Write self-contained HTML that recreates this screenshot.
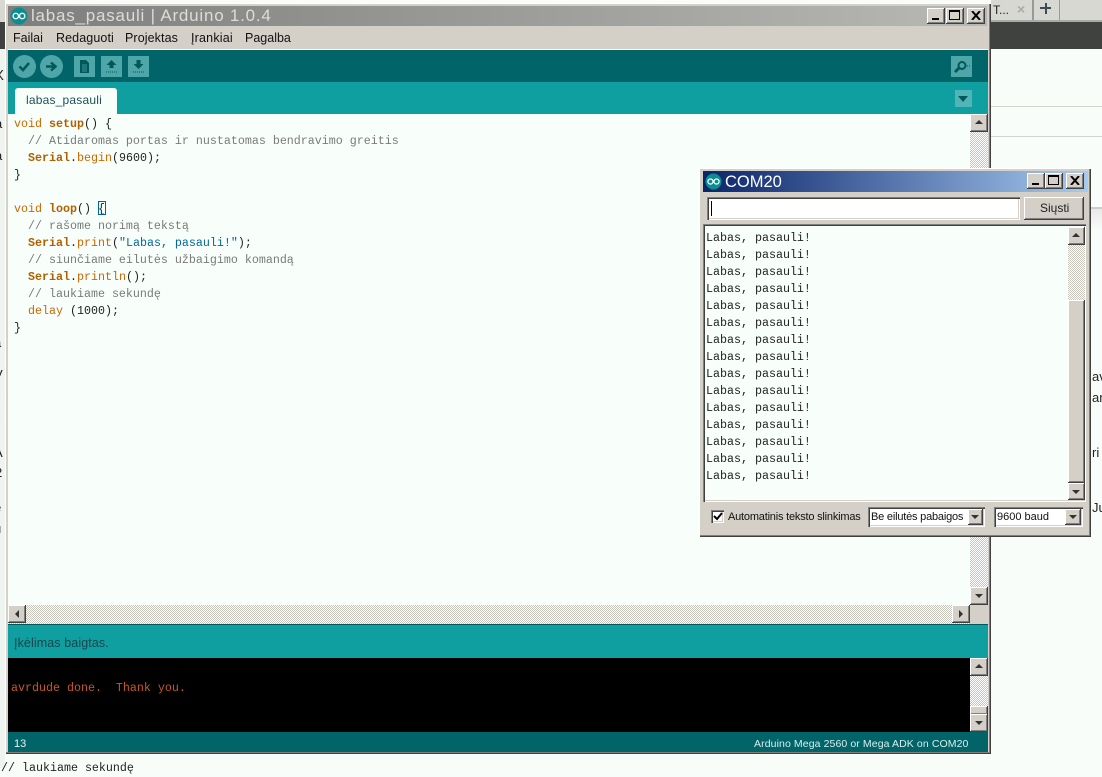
<!DOCTYPE html>
<html><head><meta charset="utf-8"><style>
*{box-sizing:border-box}
html,body{margin:0;padding:0;width:1102px;height:768px;overflow:hidden;background:#f8fdfa}
.a{position:absolute}
.t{position:absolute;white-space:pre;font-family:"Liberation Sans",sans-serif}
.m{position:absolute;white-space:pre;font-family:"Liberation Mono",monospace;font-size:11.67px;line-height:17px;color:#222}
.k{color:#cc6600}.b{color:#b06000;font-weight:bold}.c{color:#7a7a7a}.s{color:#006699}
.btn{position:absolute;background:#d4d0c8;box-shadow:inset -1px -1px #404040,inset 1px 1px #fff,inset -2px -2px #808080}
.chk{position:absolute;background:repeating-conic-gradient(#c8c5bd 0 25%,#fff 0 50%) 0 0/2px 2px}
.tri{position:absolute;width:0;height:0;border-left:4px solid transparent;border-right:4px solid transparent}
.up{border-bottom:4px solid #333}.dn{border-top:4px solid #333}
.sunk{position:absolute;background:#fff;box-shadow:inset 1px 1px #808080,inset 2px 2px #404040,inset -1px -1px #fff,inset -2px -2px #d4d0c8}
</style></head><body>
<!-- background -->
<div class="a" style="left:991px;top:0;width:111px;height:22px;background:#d8d8d2"></div>
<div class="a" style="left:991px;top:20px;width:111px;height:2px;background:#aaa"></div>
<div class="a" style="left:991px;top:22px;width:111px;height:27px;background:#3f423e"></div>
<div class="t" style="left:993px;top:3px;font-size:12px;color:#222">T...</div>
<div class="t" style="left:1017px;top:1px;font-size:14px;color:#aaa;font-weight:bold">×</div>
<div class="a" style="left:1032px;top:0;width:2px;height:20px;background:#999"></div>
<div class="a" style="left:1059px;top:0;width:1px;height:20px;background:#999"></div>
<div class="a" style="left:1040px;top:7px;width:11px;height:2px;background:#3f4a58"></div>
<div class="a" style="left:1045px;top:3px;width:2px;height:11px;background:#3f4a58"></div>
<div class="a" style="left:991px;top:106px;width:111px;height:1px;background:#d5d5d0"></div>
<div class="a" style="left:991px;top:136px;width:111px;height:1px;background:#d5d5d0"></div>
<div class="a" style="left:1091px;top:207px;width:11px;height:2px;background:#ccc"></div>
<div class="a" style="left:1091px;top:209px;width:11px;height:22px;background:linear-gradient(#e8e8e8,#f8fdfa)"></div>
<div class="t" style="left:1092px;top:369px;font-size:13px;color:#222">av</div>
<div class="t" style="left:1092px;top:390px;font-size:13px;color:#222">ar</div>
<div class="t" style="left:1092px;top:445px;font-size:13px;color:#222">ri</div>
<div class="t" style="left:1092px;top:500px;font-size:13px;color:#222">Ju</div>
<div class="a" style="left:0;top:0;width:5px;height:768px;background:#f0f4f1"></div>
<div class="a" style="left:0;top:0;width:5px;height:22px;background:#d8d8d2"></div>
<div class="a" style="left:0;top:22px;width:5px;height:27px;background:#3f423e"></div>
<div class="t" style="left:-6px;top:67px;font-size:15px;color:#333">X</div>
<div class="t" style="left:-5px;top:116px;font-size:13px;color:#222">a</div>
<div class="t" style="left:-5px;top:148px;font-size:13px;color:#222">a</div>
<div class="t" style="left:-6px;top:335px;font-size:13px;color:#222">a</div>
<div class="t" style="left:-6px;top:367px;font-size:13px;color:#222">V</div>
<div class="t" style="left:-2px;top:389px;font-size:13px;color:#222">i</div>
<div class="t" style="left:-2px;top:410px;font-size:13px;color:#222">i</div>
<div class="t" style="left:-6px;top:445px;font-size:13px;color:#222">A</div>
<div class="t" style="left:-5px;top:465px;font-size:13px;color:#222">2</div>
<div class="t" style="left:-6px;top:500px;font-size:13px;color:#222">e</div>
<div class="t" style="left:-6px;top:521px;font-size:13px;color:#222">u</div>
<div class="m" style="left:1px;top:760px;color:#222">// laukiame sekundę</div>

<!-- main window -->
<div class="a" style="left:5px;top:3px;width:986px;height:751px;background:#d4d0c8;box-shadow:inset 1px 1px #fff,inset -1px -1px #404040,inset -2px -2px #808080"></div>
<div class="a" style="left:8px;top:6px;width:979px;height:20px;background:linear-gradient(90deg,#7e7e7e,#b8b8b4)"></div>
<svg class="a" style="left:10px;top:7px" width="18" height="18" viewBox="0 0 18 18"><circle cx="9" cy="9" r="8.500" fill="#0c8d90"/><g fill="none" stroke="#fff" stroke-width="1.300"><circle cx="5.800" cy="9" r="2.700"/><circle cx="12.200" cy="9" r="2.700"/></g></svg>
<div class="t" style="left:31px;top:6px;font-size:17px;line-height:20px;color:#dcdcd8;letter-spacing:.78px">labas_pasauli | Arduino 1.0.4</div>
<div class="btn" style="left:927px;top:8px;width:18px;height:16px"><div class="a" style="left:5px;top:10px;width:7px;height:2px;background:#000"></div></div>
<div class="btn" style="left:946px;top:8px;width:18px;height:16px"><div class="a" style="left:3px;top:2px;width:11px;height:10px;border:1px solid #000;border-top-width:2px"></div></div>
<div class="btn" style="left:967px;top:8px;width:18px;height:16px"><svg class="a" style="left:4px;top:3px" width="10" height="9"><path d="M1 0L9 9M9 0L1 9" stroke="#000" stroke-width="2"/></svg></div>
<div class="t" style="left:13px;top:31px;font-size:12.500px;line-height:15px;color:#111">Failai</div>
<div class="t" style="left:56px;top:31px;font-size:12.500px;line-height:15px;color:#111;letter-spacing:.1px">Redaguoti</div>
<div class="t" style="left:125px;top:31px;font-size:12.500px;line-height:15px;color:#111;letter-spacing:.1px">Projektas</div>
<div class="t" style="left:191px;top:31px;font-size:12.500px;line-height:15px;color:#111;letter-spacing:.2px">Įrankiai</div>
<div class="t" style="left:245px;top:31px;font-size:12.500px;line-height:15px;color:#111">Pagalba</div>
<div class="a" style="left:8px;top:49px;width:980px;height:1px;background:#fff"></div>
<!-- toolbar -->
<div class="a" style="left:8px;top:50px;width:980px;height:32px;background:#006468"></div>
<svg class="a" style="left:8px;top:50px" width="980" height="32" viewBox="0 0 980 32">
<circle cx="16.500" cy="16.500" r="11.500" fill="#4fa6a8"/><path d="M11.500 16.500l3.500 3.500 6-7" fill="none" stroke="#00585c" stroke-width="2.500"/>
<circle cx="43.500" cy="16.500" r="11.500" fill="#4fa6a8"/><path d="M38 16.500h8M43 12.500l4.500 4-4.500 4" fill="none" stroke="#00585c" stroke-width="2.500"/>
<rect x="66" y="6" width="21" height="21" fill="#4fa6a8"/><path d="M72 10h6l3 3v10h-9z" fill="#00585c"/><path d="M74 15h5M74 17h5M74 19h5M74 21h5" stroke="#4fa6a8" stroke-width=".7"/>
<rect x="93" y="6" width="21" height="21" fill="#4fa6a8"/><path d="M103.500 10l5 5h-3v3h-4v-3h-3z" fill="#00585c"/><path d="M98 22h11" stroke="#00585c" stroke-dasharray="1 1"/>
<rect x="120" y="6" width="21" height="21" fill="#4fa6a8"/><path d="M128.500 10h4v4h3l-5 5-5-5h3z" fill="#00585c"/><path d="M125 22h11" stroke="#00585c" stroke-dasharray="1 1"/>
<rect x="943" y="6" width="21" height="21" fill="#4fa6a8"/><circle cx="954" cy="15.500" r="3.500" fill="none" stroke="#00585c" stroke-width="2"/><path d="M951 18l-4 4" stroke="#00585c" stroke-width="3"/><path d="M959 16h3" stroke="#00585c" stroke-dasharray="1 1"/>
</svg>
<!-- tab bar -->
<div class="a" style="left:8px;top:82px;width:980px;height:32px;background:#0f9fa0"></div>
<div class="a" style="left:15px;top:88px;width:102px;height:26px;background:#f8fffb;border-radius:3px 3px 0 0"></div>
<div class="t" style="left:26px;top:92px;font-size:12px;line-height:16px;color:#1f4f55;letter-spacing:.2px">labas_pasauli</div>
<div class="a" style="left:955px;top:90px;width:17px;height:17px;background:#4fb5b6"></div>
<div class="tri" style="left:958px;top:96px;border-left-width:5.500px;border-right-width:5.500px;border-top:6px solid #00585c"></div>
<!-- editor -->
<div class="a" style="left:8px;top:114px;width:962px;height:491px;background:#f8fffb"></div>
<div class="m" style="left:14px;top:116px"><span class="k">void</span> <span class="b">setup</span>() {
  <span class="c">// Atidaromas portas ir nustatomas bendravimo greitis</span>
  <span class="b">Serial</span>.<span class="k">begin</span>(9600);
}

<span class="k">void</span> <span class="b">loop</span>() {
  <span class="c">// rašome norimą tekstą</span>
  <span class="b">Serial</span>.<span class="k">print</span>(<span class="s">"Labas, pasauli!"</span>);
  <span class="c">// siunčiame eilutės užbaigimo komandą</span>
  <span class="b">Serial</span>.<span class="k">println</span>();
  <span class="c">// laukiame sekundę</span>
  <span class="k">delay</span> (1000);
}</div>
<div class="a" style="left:98px;top:201px;width:8px;height:14px;border:1px solid #006699"></div>
<!-- editor scrollbars -->
<div class="chk" style="left:970px;top:114px;width:18px;height:491px"></div>
<div class="btn" style="left:970px;top:114px;width:18px;height:18px"><div class="tri up" style="left:5px;top:6px"></div></div>
<div class="btn" style="left:970px;top:587px;width:18px;height:18px"><div class="tri dn" style="left:5px;top:7px"></div></div>
<div class="chk" style="left:8px;top:605px;width:962px;height:19px"></div>
<div class="btn" style="left:8px;top:605px;width:18px;height:18px"><div class="tri" style="left:7px;top:5px;border:4px solid transparent;border-left:0;border-right:4px solid #333"></div></div>
<div class="btn" style="left:952px;top:605px;width:18px;height:18px"><div class="tri" style="left:7px;top:5px;border:4px solid transparent;border-right:0;border-left:4px solid #333"></div></div>
<div class="a" style="left:8px;top:624px;width:980px;height:1px;background:#00585c"></div>
<!-- status -->
<div class="a" style="left:8px;top:625px;width:980px;height:33px;background:#0f9fa0"></div>
<div class="t" style="left:14px;top:636px;font-size:12.500px;line-height:15px;color:#17464c;letter-spacing:.1px">Įkėlimas baigtas.</div>
<!-- console -->
<div class="a" style="left:8px;top:658px;width:962px;height:74px;background:#000;overflow:hidden"><div class="m" style="left:3px;top:-14px;color:#c8562a">avrdude: safemode: Fuses OK (E:FD, H:D8, L:FF)</div></div>
<div class="m" style="left:11px;top:680px;color:#c8562a">avrdude done.  Thank you.</div>
<div class="chk" style="left:970px;top:658px;width:18px;height:74px"></div>
<div class="btn" style="left:970px;top:658px;width:18px;height:18px"><div class="tri up" style="left:5px;top:6px"></div></div>
<div class="btn" style="left:970px;top:706px;width:18px;height:9px"></div>
<div class="btn" style="left:970px;top:714px;width:18px;height:18px"><div class="tri dn" style="left:5px;top:7px"></div></div>
<!-- footer -->
<div class="a" style="left:8px;top:732px;width:980px;height:20px;background:#006468"></div>
<div class="t" style="left:14px;top:737px;font-size:11px;line-height:14px;color:#e8f4f4">13</div>
<div class="t" style="left:754px;top:737px;font-size:10.500px;line-height:14px;color:#d8eeee;letter-spacing:.1px">Arduino Mega 2560 or Mega ADK on COM20</div>

<!-- serial window -->
<div class="a" style="left:699px;top:168px;width:392px;height:369px;background:#d4d0c8;box-shadow:inset 1px 1px #fff,inset -1px -1px #404040,inset -2px -2px #808080"></div>
<div class="a" style="left:703px;top:171px;width:385px;height:21px;background:linear-gradient(90deg,#0a246a,#a6caf0)"></div>
<svg class="a" style="left:705px;top:173px" width="17" height="17" viewBox="0 0 18 18"><circle cx="9" cy="9" r="8.500" fill="#0c8d90"/><g fill="none" stroke="#fff" stroke-width="1.300"><circle cx="5.800" cy="9" r="2.700"/><circle cx="12.200" cy="9" r="2.700"/></g></svg>
<div class="t" style="left:725px;top:172px;font-size:16.500px;line-height:20px;color:#fff">COM20</div>
<div class="btn" style="left:1027px;top:173px;width:18px;height:16px"><div class="a" style="left:5px;top:10px;width:7px;height:2px;background:#000"></div></div>
<div class="btn" style="left:1045px;top:173px;width:18px;height:16px"><div class="a" style="left:3px;top:2px;width:11px;height:10px;border:1px solid #000;border-top-width:2px"></div></div>
<div class="btn" style="left:1066px;top:173px;width:18px;height:16px"><svg class="a" style="left:4px;top:3px" width="10" height="9"><path d="M1 0L9 9M9 0L1 9" stroke="#000" stroke-width="2"/></svg></div>
<div class="sunk" style="left:707px;top:197px;width:313px;height:23px"></div>
<div class="a" style="left:711px;top:201px;width:1px;height:15px;background:#000"></div>
<div class="btn" style="left:1024px;top:197px;width:60px;height:23px"></div>
<div class="t" style="left:1040px;top:201px;font-size:12px;line-height:15px;color:#222">Siųsti</div>
<div class="sunk" style="left:703px;top:224px;width:383px;height:278px;background:#f8fffb"></div>
<div class="m" style="left:706px;top:230px">Labas, pasauli!
Labas, pasauli!
Labas, pasauli!
Labas, pasauli!
Labas, pasauli!
Labas, pasauli!
Labas, pasauli!
Labas, pasauli!
Labas, pasauli!
Labas, pasauli!
Labas, pasauli!
Labas, pasauli!
Labas, pasauli!
Labas, pasauli!
Labas, pasauli!</div>
<div class="chk" style="left:1068px;top:227px;width:17px;height:273px"></div>
<div class="btn" style="left:1068px;top:227px;width:17px;height:18px"><div class="tri up" style="left:4px;top:6px"></div></div>
<div class="btn" style="left:1068px;top:300px;width:17px;height:183px"></div>
<div class="btn" style="left:1068px;top:483px;width:17px;height:17px"><div class="tri dn" style="left:4px;top:7px"></div></div>
<div class="sunk" style="left:711px;top:510px;width:13px;height:13px"></div>
<svg class="a" style="left:712px;top:511px" width="11" height="11"><path d="M2 5l3 3 5-6" fill="none" stroke="#000" stroke-width="2"/></svg>
<div class="t" style="left:728px;top:510px;font-size:11px;line-height:15px;color:#111;letter-spacing:-.2px">Automatinis teksto slinkimas</div>
<div class="sunk" style="left:868px;top:507px;width:117px;height:20px"></div>
<div class="t" style="left:871px;top:510px;font-size:11px;line-height:15px;color:#111;letter-spacing:-.2px">Be eilutės pabaigos</div>
<div class="btn" style="left:968px;top:509px;width:15px;height:16px"><div class="tri dn" style="left:3px;top:6px"></div></div>
<div class="sunk" style="left:994px;top:507px;width:89px;height:20px"></div>
<div class="t" style="left:997px;top:510px;font-size:11px;line-height:15px;color:#111">9600 baud</div>
<div class="btn" style="left:1065px;top:509px;width:16px;height:16px"><div class="tri dn" style="left:4px;top:6px"></div></div>
</body></html>
